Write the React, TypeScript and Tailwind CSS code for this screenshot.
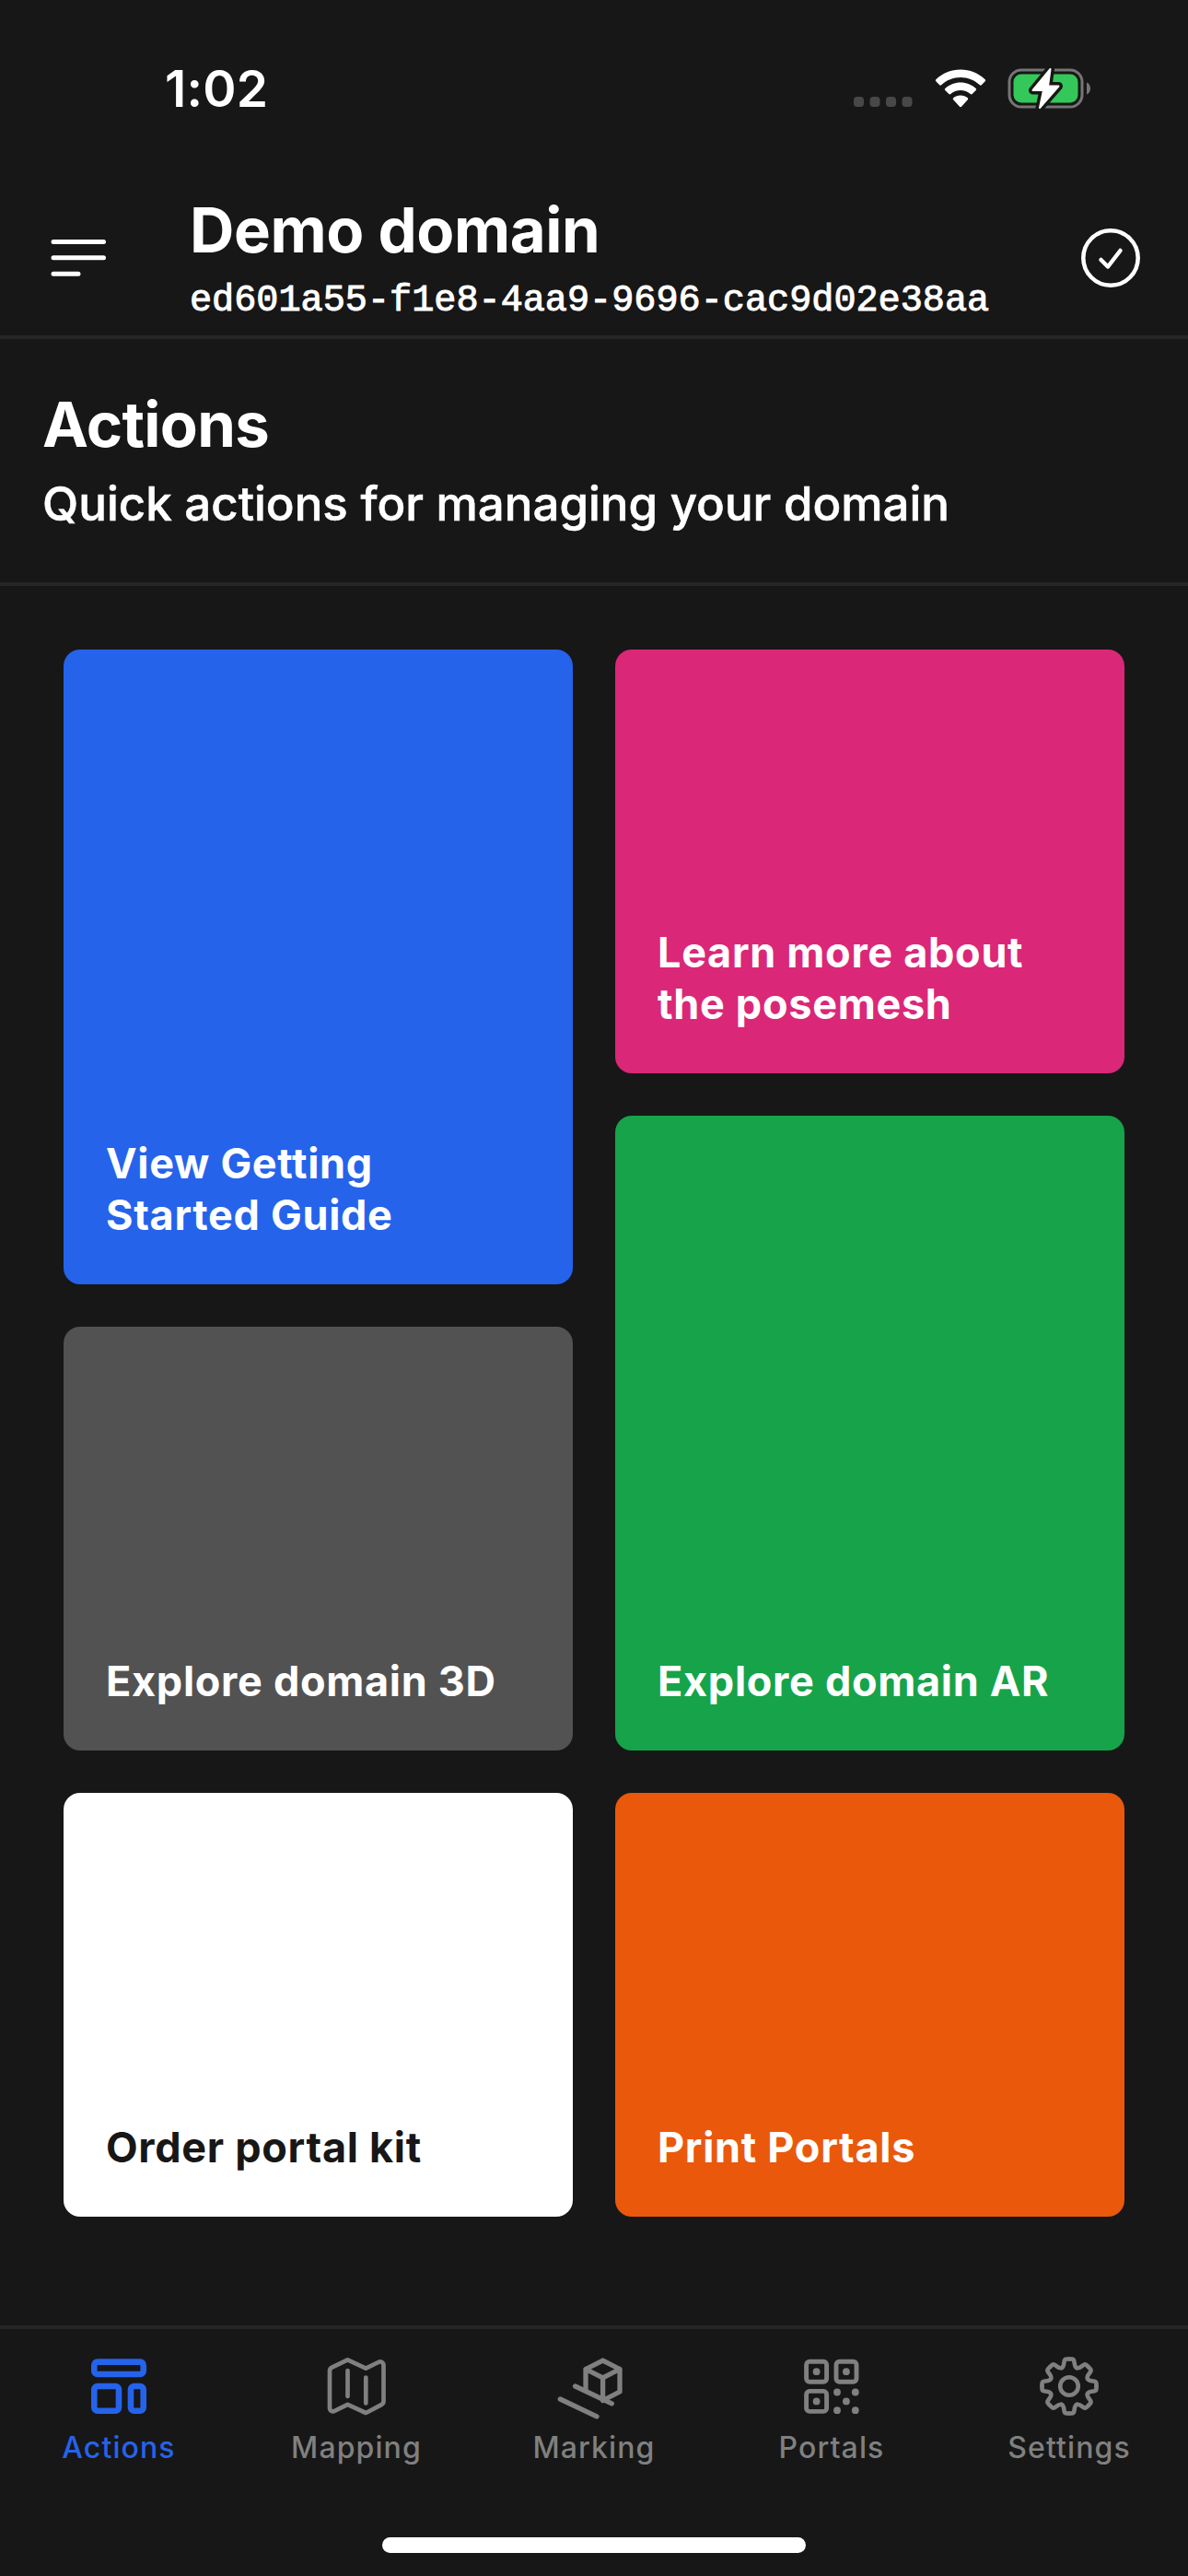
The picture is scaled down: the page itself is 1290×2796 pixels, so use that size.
import React from "react";

type Tile = {
  label: string;
  className: string;
};

const leftTiles: Tile[] = [
  { label: "View Getting Started Guide", className: "h-[689.5px] bg-[#2563eb] text-white" },
  { label: "Explore domain 3D", className: "h-[460px] bg-[#525252] text-white" },
  { label: "Order portal kit", className: "h-[460px] bg-white text-[#171717]" },
];

const rightTiles: Tile[] = [
  { label: "Learn more about the posemesh", className: "h-[460px] bg-[#db2777] text-white" },
  { label: "Explore domain AR", className: "h-[689.5px] bg-[#16a34a] text-white" },
  { label: "Print Portals", className: "h-[460px] bg-[#ea580c] text-white" },
];

function SignalDots() {
  return (
    <svg width="64" height="11" viewBox="0 0 64 11" fill="#484848">
      {[0, 17.5, 35, 52.5].map((x) => (
        <rect key={x} x={x} width="11" height="11" rx="3.8" />
      ))}
    </svg>
  );
}

function WifiIcon() {
  return (
    <svg width="56" height="42" viewBox="0 0 56 42" fill="white">
      <path d="M28 .5C38 .5 47.5 4.4 54.7 11.3c.6.6.6 1.4 0 2l-3.9 4c-.5.6-1.4.6-1.9 0C43.3 12 35.9 9 28 9S12.7 12 7.1 17.3c-.5.6-1.4.6-1.9 0l-3.9-4c-.6-.6-.6-1.4 0-2C8.5 4.4 18 .5 28 .5Z" />
      <path d="M28 14.5c6.3 0 12.2 2.4 16.7 6.5.6.6.6 1.5 0 2.1l-4 4c-.5.5-1.4.5-2 0C35.7 24.6 32 23.1 28 23.1s-7.7 1.5-10.7 4c-.6.5-1.5.5-2 0l-4-4c-.6-.6-.6-1.5 0-2.1 4.5-4.1 10.4-6.5 16.7-6.5Z" />
      <path d="M28 28.5c2.9 0 5.6 1 7.7 2.7.7.6.7 1.5.1 2.1L29 40.7c-.6.6-1.4.6-2 0l-6.8-7.4c-.6-.6-.6-1.5.1-2.1 2.1-1.7 4.8-2.7 7.7-2.7Z" />
    </svg>
  );
}

function BatteryIcon() {
  return (
    <svg width="92" height="46" viewBox="0 0 92 46">
      <rect x="2" y="3" width="79" height="40" rx="13" fill="none" stroke="#757575" strokeWidth="3" />
      <rect x="6.5" y="7.5" width="70" height="31" rx="8.5" fill="#34c759" />
      <path d="M86 16.5c2.7 1.2 4 3.6 4 6.5s-1.3 5.3-4 6.5Z" fill="#757575" />
      <path
        d="M46.5 2 27.5 25H39L35 44 55.5 20.5H44Z"
        fill="white"
        stroke="#171717"
        strokeWidth="9"
        strokeLinejoin="round"
      />
      <path
        d="M46.5 2 27.5 25H39L35 44 55.5 20.5H44Z"
        fill="white"
        stroke="white"
        strokeWidth="2"
        strokeLinejoin="round"
      />
    </svg>
  );
}

function MenuIcon() {
  return (
    <svg width="60" height="42" viewBox="0 0 60 42" fill="none" stroke="white" strokeWidth="5" strokeLinecap="round">
      <path d="M3 3.5H57.5M3 20.8H57.5M3 38.2H30" />
    </svg>
  );
}

function CheckIcon() {
  return (
    <svg width="64" height="64" viewBox="0 0 64 64" fill="none" stroke="white" strokeWidth="4.5">
      <circle cx="32" cy="32" r="29.7" />
      <path d="M21.5 34 29 41.5 42.5 24" strokeLinecap="round" strokeLinejoin="round" />
    </svg>
  );
}

function ActionsIcon() {
  return (
    <svg width="72" height="72" viewBox="0 0 72 72" fill="none" stroke="currentColor" strokeWidth="6.6">
      <rect x="9.3" y="9.6" width="53.4" height="13.4" rx="3.6" />
      <rect x="9.3" y="36" width="26.7" height="26.7" rx="3.6" />
      <rect x="49" y="36" width="13.7" height="26.7" rx="3.6" />
    </svg>
  );
}

function MapIcon() {
  return (
    <svg
      width="72"
      height="72"
      viewBox="0 0 72 72"
      fill="none"
      stroke="currentColor"
      strokeWidth="4.7"
      strokeLinecap="round"
      strokeLinejoin="round"
    >
      <path d="M7 59.6V19.4c0-2 .8-3 2.4-3.8L26.5 7.4 46.3 16.7 59.8 10c2.8-1.4 5.7.2 5.7 3.3V52.3c0 2-.8 3-2.4 3.8L46.3 65 26.500 55.900 12.700 62.700C9.900 64.200 7 62.700 7 59.600Z" />
      <path d="M26.5 19V47M46.3 26.5V54.5" />
    </svg>
  );
}

function MarkingIcon() {
  return (
    <svg
      width="72"
      height="72"
      viewBox="0 0 72 72"
      fill="none"
      stroke="currentColor"
      strokeWidth="5.3"
      strokeLinecap="round"
      strokeLinejoin="round"
      className="overflow-visible"
    >
      <path d="M45.6 8.2 64 17.5V42L45.6 51.5M27 40V17.5L45.6 8.2M27 17.5 45.6 26.9 64 17.5M45.6 26.9V51.5" />
      <path d="M15.6 36 55.3 54.8M-.7 50 39 68.8" />
    </svg>
  );
}

function PortalsIcon() {
  return (
    <svg width="72" height="72" viewBox="0 0 72 72">
      <g fill="none" stroke="currentColor" strokeWidth="4.9">
        <rect x="8.6" y="9.2" width="22" height="22" rx="3.5" />
        <rect x="41" y="9.2" width="22" height="22" rx="3.5" />
        <rect x="8.6" y="41.4" width="22" height="22" rx="3.5" />
      </g>
      <g fill="currentColor">
        <circle cx="19.6" cy="20.2" r="3.9" />
        <circle cx="51.9" cy="20.2" r="3.9" />
        <circle cx="19.6" cy="52.4" r="3.9" />
        <circle cx="51.9" cy="52.4" r="3.9" />
        <circle cx="42" cy="42.5" r="3.9" />
        <circle cx="61.8" cy="42.5" r="3.9" />
        <circle cx="42" cy="62.2" r="3.9" />
        <circle cx="61.8" cy="62.2" r="3.9" />
      </g>
    </svg>
  );
}

// Half a gear tooth, mirrored and rotated eight times
const halfTooth = "M0 -29.5H2.5C4.5 -29.5 5.3 -28.5 5.5 -26.3C5.8 -23.5 5.9 -20.9 8.2 -19.9";

function SettingsIcon() {
  return (
    <svg
      width="72"
      height="72"
      viewBox="-36 -36 72 72"
      fill="none"
      stroke="currentColor"
      strokeWidth="4.6"
      strokeLinecap="round"
    >
      {[0, 45, 90, 135, 180, 225, 270, 315].map((angle) => (
        <g key={angle} transform={`rotate(${angle})`}>
          <path d={halfTooth} />
          <path d={halfTooth} transform="scale(-1 1)" />
        </g>
      ))}
      <circle r="9.8" />
    </svg>
  );
}

const tabs = [
  { label: "Actions", icon: <ActionsIcon />, active: true },
  { label: "Mapping", icon: <MapIcon /> },
  { label: "Marking", icon: <MarkingIcon /> },
  { label: "Portals", icon: <PortalsIcon /> },
  { label: "Settings", icon: <SettingsIcon /> },
];

function TileColumn({ tiles }: { tiles: Tile[] }) {
  return (
    <div className="flex flex-1 flex-col gap-[46px]">
      {tiles.map((tile) => (
        <button
          key={tile.label}
          className={`flex items-end rounded-[18px] pr-[70px] pb-[47px] pl-[46px] text-left text-[45px] leading-[56px] font-bold tracking-[0.7px] ${tile.className}`}
        >
          {tile.label}
        </button>
      ))}
    </div>
  );
}

export default function App() {
  return (
    <div className="flex h-[2796px] w-[1290px] flex-col overflow-hidden bg-[#171717] font-['Inter',sans-serif] text-white">
      {/* Status bar */}
      <div className="flex h-[190px] shrink-0 items-start justify-between pt-[62px] pr-[104px] pl-[179px]">
        <span className="text-[55px] leading-[68px] font-semibold tracking-[0.2px]">1:02</span>
        <div className="flex items-center pt-[11px]">
          <div className="pt-[28px]">
            <SignalDots />
          </div>
          <div className="ml-[24px]">
            <WifiIcon />
          </div>
          <div className="ml-[23px]">
            <BatteryIcon />
          </div>
        </div>
      </div>

      {/* Header */}
      <header className="flex h-[178px] shrink-0 items-center justify-between border-b-[4px] border-[#262626] pt-[6px] pr-[52px] pl-[55px]">
        <div className="flex items-center gap-[91px]">
          <MenuIcon />
          <div className="flex flex-col">
            <h1 className="text-[67px] leading-[80px] font-bold tracking-[-0.4px]">Demo domain</h1>
            <p className="mt-[16px] mb-[2px] font-['Liberation_Mono',monospace] text-[40.2px] leading-[42px] [-webkit-text-stroke:1px_white]">
              ed601a55-f1e8-4aa9-9696-cac9d02e38aa
            </p>
          </div>
        </div>
        <CheckIcon />
      </header>

      {/* Section title */}
      <section className="flex h-[268px] shrink-0 flex-col border-b-[4px] border-[#262626] px-[46px] pt-[53px]">
        <h2 className="text-[67px] leading-[80px] font-bold tracking-[-0.7px]">Actions</h2>
        <p className="mt-[15px] text-[51px] leading-[62px] font-medium [-webkit-text-stroke:0.6px_white]">
          Quick actions for managing your domain
        </p>
      </section>

      {/* Tiles */}
      <main className="flex flex-1 gap-[46px] px-[69px] pt-[68.5px]">
        <TileColumn tiles={leftTiles} />
        <TileColumn tiles={rightTiles} />
      </main>

      {/* Tab bar */}
      <nav className="flex h-[272px] shrink-0 flex-col border-t-[4px] border-[#262626]">
        <div className="flex h-[226px] pt-[26px]">
          {tabs.map((tab) => (
            <div
              key={tab.label}
              className={`flex flex-1 flex-col items-center ${tab.active ? "text-[#2563eb]" : "text-[#808080]"}`}
            >
              {tab.icon}
              <span className="mt-[11px] text-[32px] leading-[40px] font-medium tracking-[1.1px]">{tab.label}</span>
            </div>
          ))}
        </div>
        <div className="h-[17px] w-[460px] self-center rounded-full bg-white" />
      </nav>
    </div>
  );
}
